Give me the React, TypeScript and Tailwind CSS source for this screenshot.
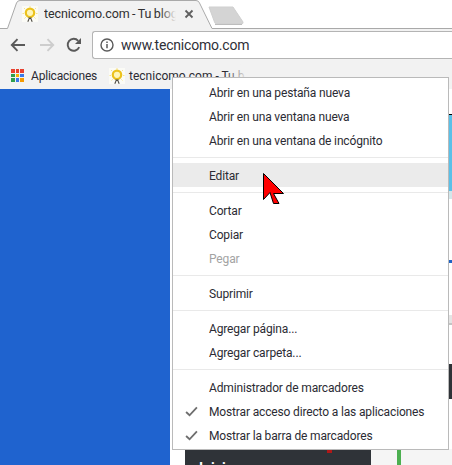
import React from "react";

const FONT = "font-['Roboto','Noto_Sans',sans-serif]";

function Bulb({ className }: { className?: string }) {
  return (
    <svg viewBox="0 0 16 16" className={className}>
      <rect width="16" height="16" fill="#fbfbf6" />
      <path d="M8 0v1.5M2 2l1.2 1.2M14 2l-1.2 1.2M0.5 7.5h1.5M14 7.5h1.5M2.5 12.5l1.2-1.2M13.5 12.5l-1.2-1.2" stroke="#f6e48a" strokeWidth="1" />
      <circle cx="8" cy="6.8" r="4.2" fill="#fff6b8" stroke="#ecc21c" strokeWidth="2.2" />
      <path d="M6.2 11.5h3.6l-.6 1.5H6.8z" fill="#4f4c45" />
      <path d="M7 13l-1.2 2.7M9 13l1.2 2.7" stroke="#4f4c45" strokeWidth="1.1" />
    </svg>
  );
}

function Apps() {
  const c = ["#e8412f", "#e8412f", "#e8412f", "#2f9e4f", "#f5b400", "#3b78e7", "#2f9e4f", "#3b78e7", "#f59a00"];
  return (
    <div className="grid grid-cols-3 gap-px w-[13px] h-[13px]">
      {c.map((x, i) => (
        <div key={i} className="w-[3.67px] h-[3.67px]" style={{ backgroundColor: x }} />
      ))}
    </div>
  );
}

function Row({ label, muted, checked, active }: { label: string; muted?: boolean; checked?: boolean; active?: boolean }) {
  return (
    <div className={`h-6 flex items-center ${active ? "bg-[#ebebeb]" : ""}`}>
      <div className="w-[36px] shrink-0 flex justify-center pl-[1px]">
        {checked && (
          <svg width="13" height="11" viewBox="0 0 12 10">
            <path d="M1 5.5l3.2 3L11 1.2" fill="none" stroke="#6e6e6e" strokeWidth="1.7" />
          </svg>
        )}
      </div>
      <span className={`text-[12px] tracking-[-0.15px] whitespace-nowrap pt-[1px] ${muted ? "text-[#a3a3a3]" : "text-[#2b2b33]"}`}>
        {label}
      </span>
    </div>
  );
}

function Sep() {
  return (
    <div className="py-[5px]">
      <div className="h-px bg-[#e9e9e9]" />
    </div>
  );
}

export default function App() {
  return (
    <div className={`relative w-[452px] h-[465px] overflow-hidden bg-white flex flex-col ${FONT}`}>
      {/* Tab strip */}
      <div className="relative h-[29px] shrink-0 bg-white">
        <svg className="absolute left-0 top-0" width="452" height="29" viewBox="0 0 452 29">
          <path d="M7.5 29L16.5 3Q17.5 1 20 1H196Q198 1 199 3L212 29Z" fill="#f2f2f2" />
          <path d="M0 28.5H7.5L16.5 3Q17.5 .5 20 .5H196Q198.5 .5 199.5 3L212 28.5H452" fill="none" stroke="#a9a9a9" />
          <path d="M209 7H233L243 22Q243.5 24 241 24H217Q215 24 214.5 22Z" fill="#d4d4d4" stroke="#cfcfcf" />
          <path d="M215 24.5H242" stroke="#bdbdbd" />
        </svg>
        <div className="relative h-full flex items-center pl-[22px] pb-[1px]">
          <Bulb className="w-4 h-4 shrink-0" />
          <span className="ml-[6px] text-[12.5px] tracking-[-0.1px] [word-spacing:-0.5px] text-[#303030] whitespace-nowrap w-[132px] overflow-hidden">
            tecnicomo.com - Tu blog
          </span>
          <svg className="ml-[8px]" width="10" height="10" viewBox="0 0 10 10">
            <path d="M1.5 1.5l7 7M8.5 1.5l-7 7" stroke="#5f5f5f" strokeWidth="1.8" />
          </svg>
        </div>
        <div className="absolute left-[160px] top-[5px] w-[16px] h-[20px] bg-gradient-to-r from-transparent to-[#f2f2f2]" />
      </div>

      {/* Toolbar */}
      <div className="h-[32px] shrink-0 bg-[#f2f2f2] flex items-center">
        <div className="w-[92px] shrink-0 flex items-center">
          <svg className="ml-[10px]" width="16" height="14" viewBox="0 0 16 14">
            <path d="M15 7H2M7.5 1.2L1.8 7l5.7 5.8" fill="none" stroke="#5a5a5a" strokeWidth="1.9" />
          </svg>
          <svg className="ml-[13px]" width="16" height="14" viewBox="0 0 16 14">
            <path d="M1 7h13M8.5 1.2L14.2 7l-5.7 5.8" fill="none" stroke="#cdcdcd" strokeWidth="1.9" />
          </svg>
          <svg className="ml-[11px]" width="16" height="16" viewBox="0 0 16 16">
            <path d="M13.2 10.2A6 6 0 1 1 12.2 3.8" fill="none" stroke="#5a5a5a" strokeWidth="1.9" />
            <path d="M15 1v6H9z" fill="#5a5a5a" />
          </svg>
        </div>
        <div className="flex-1 h-[28px] bg-white border border-r-0 border-[#b4b4b4] rounded-l-[3px] flex items-center">
          <svg className="ml-[7px]" width="14" height="14" viewBox="0 0 14 14">
            <circle cx="7" cy="7" r="6" fill="none" stroke="#5a5a5a" strokeWidth="1.4" />
            <path d="M7 6v4.2" stroke="#5a5a5a" strokeWidth="1.5" />
            <path d="M7 3.4v1.5" stroke="#5a5a5a" strokeWidth="1.5" />
          </svg>
          <span className="ml-[7px] text-[14px] tracking-[-0.2px] text-[#2f2f38] whitespace-nowrap">www.tecnicomo.com</span>
        </div>
      </div>

      {/* Bookmarks */}
      <div className="h-[28px] shrink-0 bg-[#f2f2f2] flex items-center relative pt-[1px]">
        <div className="ml-[11px]">
          <Apps />
        </div>
        <span className="ml-[7px] text-[12px] tracking-[-0.2px] text-[#2b2b33] whitespace-nowrap">Aplicaciones</span>
        <Bulb className="ml-[12px] w-4 h-4 shrink-0" />
        <span className="ml-[4px] text-[12px] text-[#2b2b33] whitespace-nowrap">tecnicomo.com - Tu b</span>
        <div className="absolute left-[225px] top-0 w-[22px] h-full bg-gradient-to-r from-transparent to-[#f2f2f2]" />
      </div>

      {/* Page */}
      <div className="flex-1 flex min-h-0">
        <div className="w-[170px] shrink-0 bg-[#1f63cf]" />
        <div className="flex-1 flex flex-col items-end min-w-0">
          <div className="w-[3px] flex flex-col h-[360px] shrink-0">
            <div className="h-[25px] bg-white" />
            <div className="h-px bg-black" />
            <div className="h-[76px] bg-[#5bc0e8]" />
            <div className="h-[8px] bg-[#d3e6ea]" />
            <div className="h-[61px] bg-white" />
            <div className="h-[3px] bg-[#1f63c4]" />
            <div className="h-[52px] bg-white" />
            <div className="h-[8px] bg-[#e4e4e4]" />
            <div className="h-[2px] bg-[#c4c4c4]" />
            <div className="h-[39px] bg-white" />
            <div className="h-[35px] bg-[#2f3338]" />
            <div className="flex-1 bg-white" />
          </div>
          <div className="w-full flex-1 flex min-h-0">
            <div className="w-[15px] shrink-0 bg-white" />
            <div className="w-[186px] shrink-0 bg-[#2f3338] pl-[14px] pt-[9px] text-[14px] font-bold text-white leading-5 overflow-hidden">
              Inicio
            </div>
            <div className="flex-1 bg-[#f5f5f5] pl-[26px]">
              <div className="w-[4px] h-full bg-[#4caf50]" />
            </div>
          </div>
        </div>
      </div>

      {/* Context menu */}
      <div className="absolute left-[172px] top-[77px] w-[277px] h-[373px] bg-white border border-[#bababa] pt-[2px]">
        <Row label="Abrir en una pestaña nueva" />
        <Row label="Abrir en una ventana nueva" />
        <Row label="Abrir en una ventana de incógnito" />
        <Sep />
        <Row label="Editar" active />
        <Sep />
        <Row label="Cortar" />
        <Row label="Copiar" />
        <Row label="Pegar" muted />
        <Sep />
        <Row label="Suprimir" />
        <Sep />
        <Row label="Agregar página..." />
        <Row label="Agregar carpeta..." />
        <Sep />
        <Row label="Administrador de marcadores" />
        <Row label="Mostrar acceso directo a las aplicaciones" checked />
        <Row label="Mostrar la barra de marcadores" checked />
      </div>

      {/* Annotation cursor */}
      <svg className="absolute left-[260px] top-[170px]" width="28" height="38" viewBox="0 0 28 38">
        <path d="M3.5 3.5L23.5 23.5H13.5L19 33.5H13.5L10 22.5L3.5 29.5Z" fill="#ff0000" stroke="#000" strokeWidth="1" />
      </svg>
      <div className="absolute left-[327px] top-[450px] w-[5px] h-[3px] bg-[#b01818]" />
    </div>
  );
}
